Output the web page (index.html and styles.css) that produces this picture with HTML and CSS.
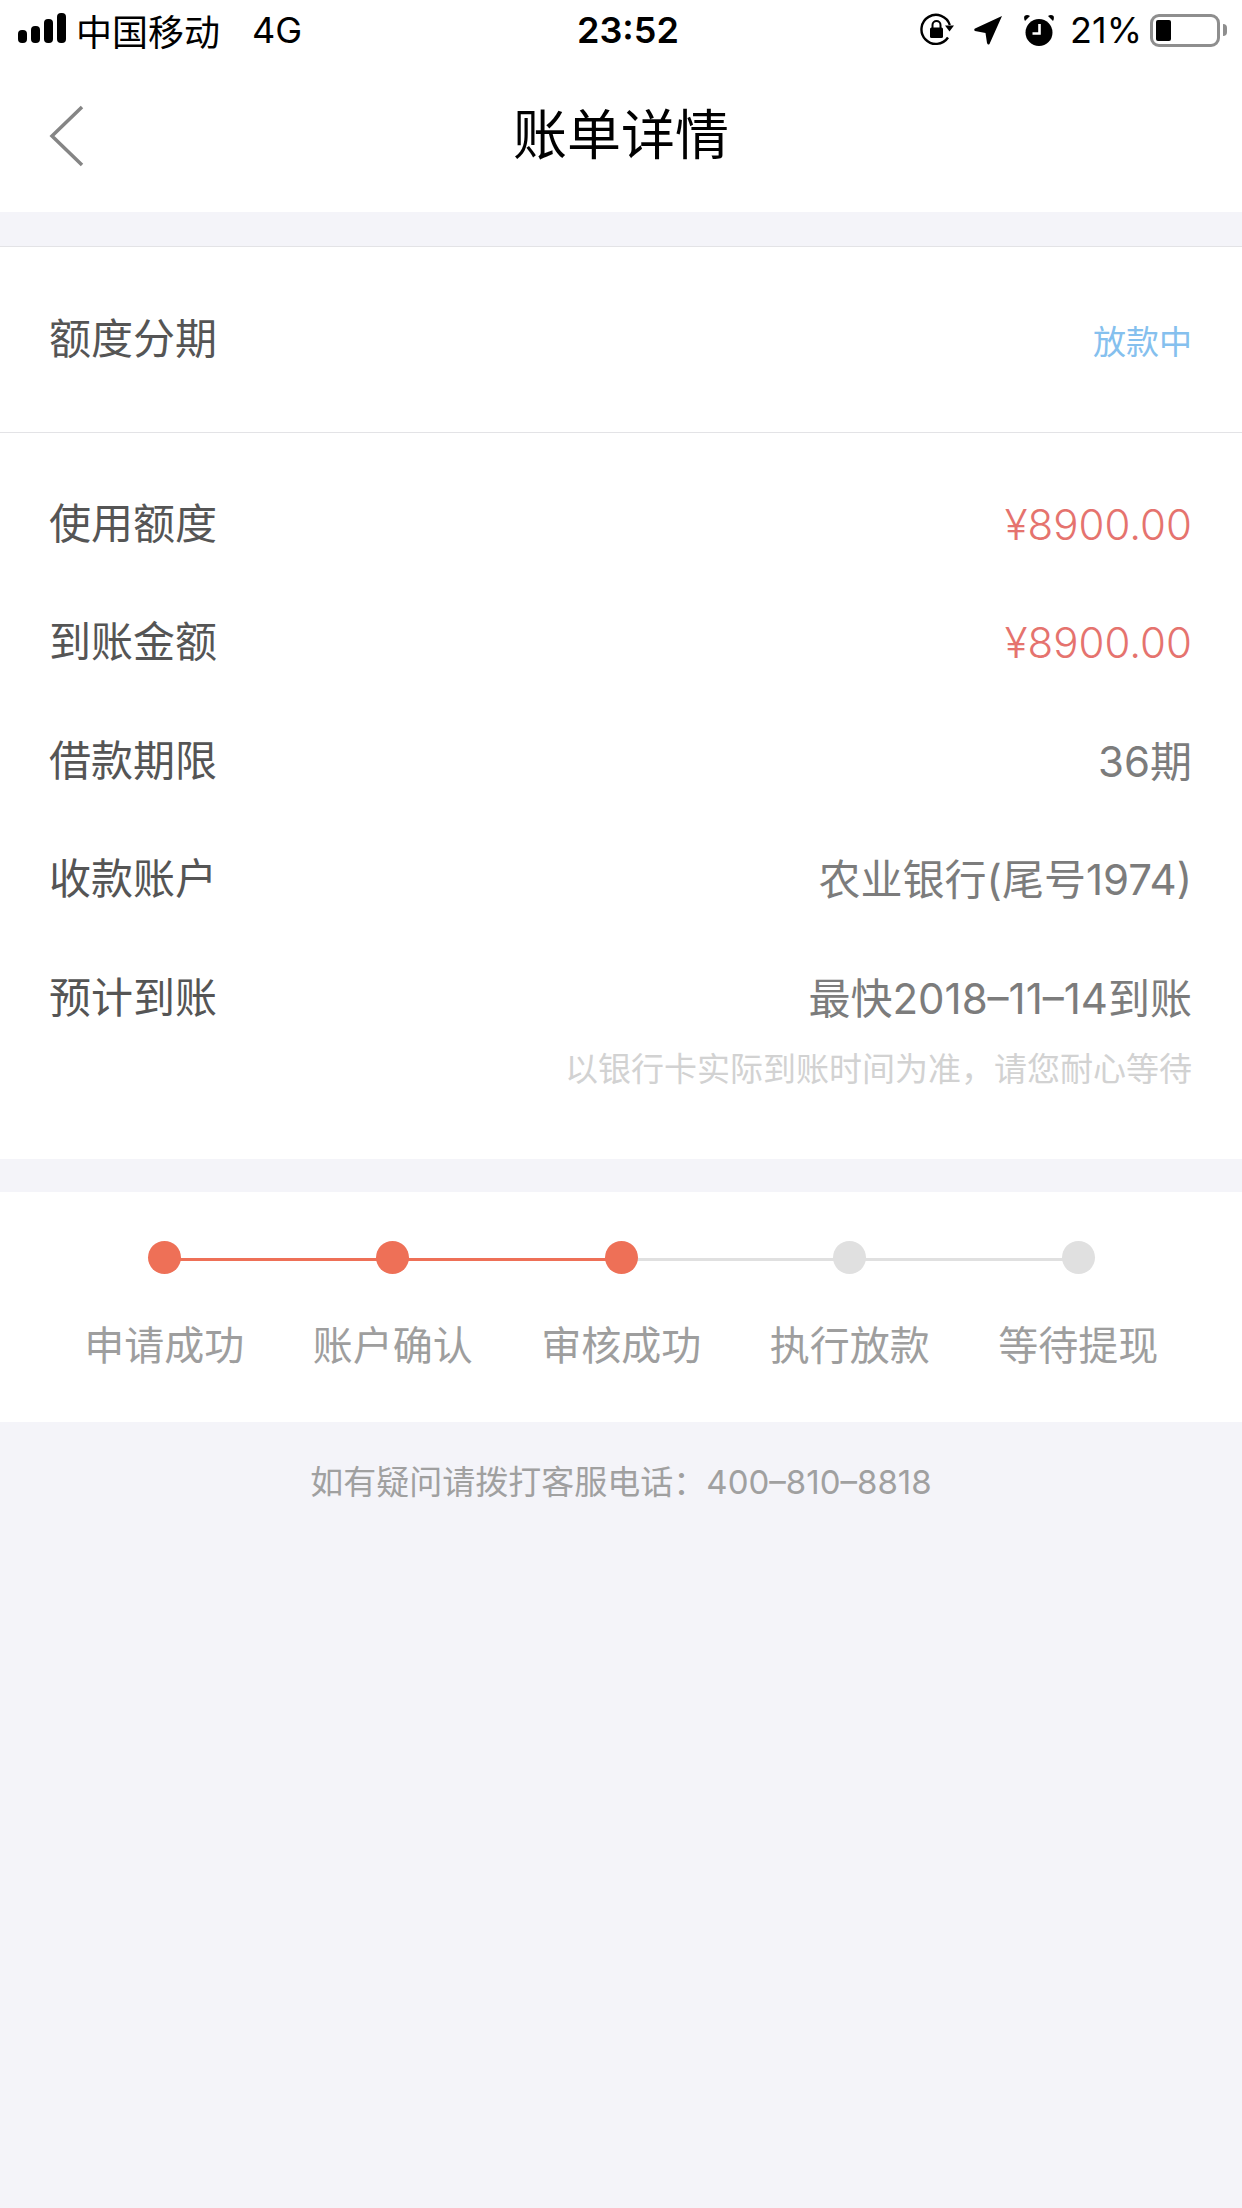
FILE: index.html
```html
<!DOCTYPE html>
<html lang="zh-CN">
<head>
    <meta charset="UTF-8">
    <meta name="viewport" content="width=device-width, initial-scale=1.0">
    <title>账单详情</title>
    <link rel="stylesheet" href="styles.css">
</head>
<body>
    <div class="status-bar">
        <div class="status-left">
            <svg class="signal" width="48" height="30" viewBox="0 0 48 30">
                <rect x="0" y="17" width="9" height="13" rx="4"/>
                <rect x="13" y="13" width="9" height="17" rx="4"/>
                <rect x="26" y="6" width="9" height="24" rx="4"/>
                <rect x="39" y="0" width="9" height="30" rx="4"/>
            </svg>
            <span class="carrier">中国移动</span>
            <span class="network">4G</span>
        </div>
        <div class="status-time">23:52</div>
        <div class="status-right">
            <!-- rotation lock -->
            <svg width="34" height="34" viewBox="0 0 34 34">
                <path d="M28 24.5A14.5 14.5 0 1 1 29.8 12" fill="none" stroke="#000" stroke-width="2.4"/>
                <path d="M25 12.5h9l-4.500 6z"/>
                <rect x="10" y="14.500" width="13" height="10.500" rx="1.500"/>
                <path d="M12.500 15v-3a4 4 0 0 1 8 0v3" fill="none" stroke="#000" stroke-width="2"/>
            </svg>
            <!-- location arrow -->
            <svg class="icon-arrow" width="28" height="30" viewBox="0 0 28 30">
                <path d="M28 1 L15.500 29 Q14 30.500 13 28 L11.500 18 L1 16 Q-0.500 14.500 1 13.500z"/>
            </svg>
            <!-- alarm clock -->
            <svg class="icon-alarm" width="30" height="33" viewBox="0 0 30 33">
                <circle cx="15" cy="18.500" r="13.500"/>
                <path d="M1 7 L6 2 Q3 0 0.500 2 Q-0.500 4.500 1 7z"/>
                <path d="M29 7 L24 2 Q27 0 29.500 2 Q30.500 4.500 29 7z"/>
                <path d="M15.500 10v9.500h-7" fill="none" stroke="#fff" stroke-width="2.600"/>
            </svg>
            <span class="battery-text">21%</span>
            <div class="battery">
                <div class="battery-level"></div>
            </div>
            <div class="battery-nub"></div>
        </div>
    </div>

    <div class="nav-bar">
        <svg class="back" width="36" height="62" viewBox="0 0 36 62">
            <path d="M33 2 L3 31 L33 60" fill="none" stroke="#858585" stroke-width="3.500"/>
        </svg>
        <h1 class="nav-title">账单详情</h1>
    </div>

    <div class="section section-type">
        <span class="label">额度分期</span>
        <span class="state">放款中</span>
    </div>

    <div class="section section-info">
        <div class="row">
            <span class="label">使用额度</span>
            <span class="value value-money">¥8900.00</span>
        </div>
        <div class="row">
            <span class="label">到账金额</span>
            <span class="value value-money">¥8900.00</span>
        </div>
        <div class="row">
            <span class="label">借款期限</span>
            <span class="value">36期</span>
        </div>
        <div class="row">
            <span class="label">收款账户</span>
            <span class="value">农业银行(尾号1974)</span>
        </div>
        <div class="row">
            <span class="label">预计到账</span>
            <span class="value">最快2018–11–14到账</span>
        </div>
        <p class="hint">以银行卡实际到账时间为准，请您耐心等待</p>
    </div>

    <div class="section section-steps">
        <div class="step step-done">
            <span class="dot"></span>
            <span class="step-name">申请成功</span>
        </div>
        <div class="step step-done">
            <span class="dot"></span>
            <span class="step-name">账户确认</span>
        </div>
        <div class="step step-done">
            <span class="dot"></span>
            <span class="step-name">审核成功</span>
        </div>
        <div class="step">
            <span class="dot"></span>
            <span class="step-name">执行放款</span>
        </div>
        <div class="step">
            <span class="dot"></span>
            <span class="step-name">等待提现</span>
        </div>
    </div>

    <p class="contact">如有疑问请拨打客服电话：400–810–8818</p>
</body>
</html>
```

FILE: styles.css
```css
:root {
    --page-bg: #f4f4f9;
    --line-color: #e3e3e6;
    --label-color: #555;
    --value-color: #7c7c7c;
    --money-color: #e5736e;
    --step-color: #ee7057;
    --step-off: #e0e0e0;
}

* {
    box-sizing: border-box;
}

html,
body {
    margin: 0;
    height: 100%;
}

body {
    min-height: 2208px;
    background-color: var(--page-bg);
    font-family: Inter, "Noto Sans CJK SC", sans-serif;
    font-weight: 400;
    color: var(--label-color);
}

.status-bar {
    display: grid;
    grid-template-columns: 559px auto 1fr;
    align-items: center;
    height: 60px;
    padding: 0 15px 0 18px;
    background-color: #fff;
    color: #000;
}

.status-left {
    display: flex;
    align-items: center;
    font-size: 36px;
}

.signal {
    margin-right: 10px;
    margin-bottom: 4px;
}

.carrier {
    margin-right: 32px;
}

.status-time {
    font-size: 36px;
    font-weight: 600;
}

.status-right {
    display: flex;
    align-items: center;
    justify-content: flex-end;
    font-size: 36px;
}

.icon-arrow {
    margin-left: 20px;
}

.icon-alarm {
    margin-left: 22px;
}

.battery-text {
    margin-left: 16px;
}

.battery {
    width: 70px;
    height: 33px;
    margin-left: 8px;
    padding: 3px;
    border: 3px solid #8e8e8e;
    border-radius: 9px;
}

.battery-level {
    width: 15px;
    height: 100%;
    border-radius: 2px;
    background-color: #000;
}

.battery-nub {
    width: 4px;
    height: 12px;
    margin-left: 3px;
    border-radius: 0 6px 6px 0;
    background-color: #8e8e8e;
}

.nav-bar {
    position: relative;
    display: flex;
    justify-content: center;
    align-items: center;
    height: 152px;
    padding-bottom: 10px;
    background-color: #fff;
}

.back {
    position: absolute;
    left: 49px;
    top: 45px;
}

.nav-title {
    margin: 0;
    font-size: 54px;
    font-weight: 400;
    color: #000;
}

.section {
    background-color: #fff;
}

.label {
    margin-bottom: 8px;
    font-size: 42px;
}

.value {
    margin-bottom: 6px;
    font-size: 42px;
    color: var(--value-color);
}

.value-money {
    margin-bottom: 0;
    font-weight: 300;
    color: var(--money-color);
}

.section-type {
    display: flex;
    justify-content: space-between;
    align-items: center;
    height: 187px;
    margin-top: 34px;
    padding: 0 50px 0 49px;
    border-top: 1px solid var(--line-color);
    border-bottom: 1px solid var(--line-color);
}

.state {
    font-size: 33px;
    color: #85c0ee;
}

.section-info {
    height: 726px;
    padding: 32px 50px 0 49px;
}

.row {
    display: flex;
    justify-content: space-between;
    align-items: center;
    height: 118.500px;
}

.hint {
    margin: 0;
    margin-top: -15px;
    text-align: right;
    font-size: 33px;
    color: #d2d2d2;
}

.section-steps {
    display: flex;
    height: 230px;
    margin-top: 33px;
    padding-top: 49px;
    padding-left: 50px;
}

.step {
    position: relative;
    display: flex;
    flex-direction: column;
    align-items: center;
    width: 228.500px;
}

.dot {
    position: relative;
    z-index: 1;
    width: 33px;
    height: 33px;
    border-radius: 50%;
    background-color: var(--step-off);
}

.step-done .dot {
    background-color: var(--step-color);
}

/* connector running from each dot to the next one */
.step:not(:last-child)::after {
    content: "";
    position: absolute;
    left: 50%;
    top: 17px;
    width: 100%;
    height: 3px;
    background-color: var(--step-off);
}

.step-done:nth-child(-n+2)::after {
    background-color: var(--step-color);
}

.step-name {
    margin-top: 40px;
    font-size: 40px;
    white-space: nowrap;
    color: #9e9e9e;
}

.contact {
    margin: 0;
    padding-top: 34px;
    text-align: center;
    font-size: 33px;
    color: #a0a0a0;
}
```
